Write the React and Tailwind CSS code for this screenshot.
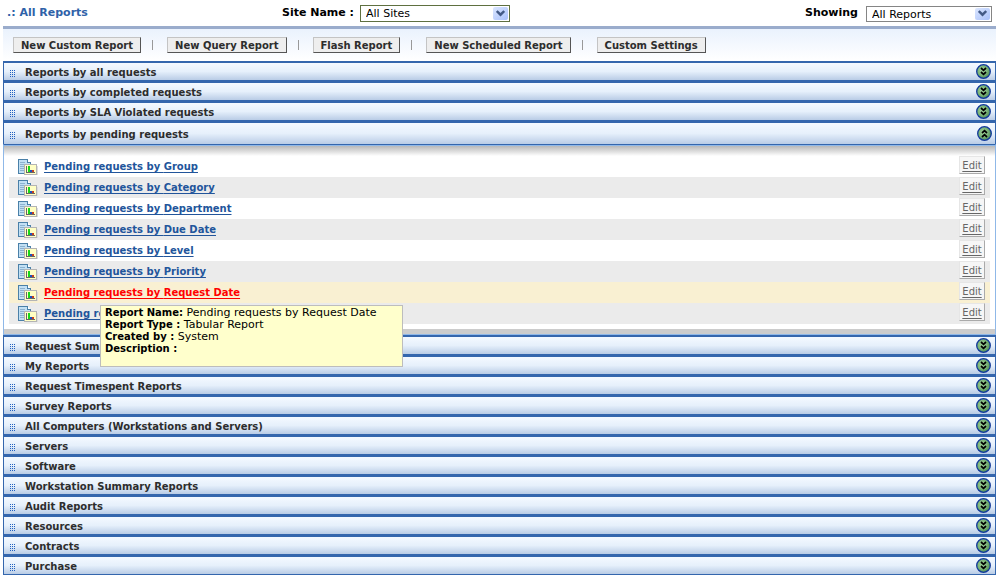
import React, { useState } from 'react'
import { clsx } from 'clsx'

const actions = ['New Custom Report', 'New Query Report', 'Flash Report', 'New Scheduled Report', 'Custom Settings']

const pendingReports = ['Group', 'Category', 'Department', 'Due Date', 'Level', 'Priority', 'Request Date', 'Technician']

const topSections = ['Reports by all requests', 'Reports by completed requests', 'Reports by SLA Violated requests']

const bottomSections = [
    'Request Summary Reports',
    'My Reports',
    'Request Timespent Reports',
    'Survey Reports',
    'All Computers (Workstations and Servers)',
    'Servers',
    'Software',
    'Workstation Summary Reports',
    'Audit Reports',
    'Resources',
    'Contracts',
    'Purchase',
]

function GripIcon() {
    return (
        <svg width="6" height="8" viewBox="0 0 6 8" shapeRendering="crispEdges" className="mt-1 shrink-0" aria-hidden="true">
            {[0, 2, 4].map(x => [0, 2, 4, 6].map(y => (
                <rect key={`${x}-${y}`} x={x} y={y} width="1" height="1" fill="#2060c0" />
            )))}
        </svg>
    )
}

function ToggleIcon({ open }) {
    return (
        <svg width="15" height="15" viewBox="0 0 15 15" className="shrink-0" aria-hidden="true">
            <defs>
                <radialGradient id={open ? 'ballOpen' : 'ballClosed'} cx="42%" cy="42%" r="60%">
                    <stop offset="0" stopColor="#a3d69d" />
                    <stop offset="0.6" stopColor="#78b276" />
                    <stop offset="1" stopColor="#4e8a58" />
                </radialGradient>
            </defs>
            <circle cx="7.5" cy="7.5" r="6.8" fill={open ? 'url(#ballOpen)' : 'url(#ballClosed)'} stroke="#12399b" strokeWidth="1.3" />
            <g transform={open ? 'rotate(180 7.5 7.5)' : undefined} fill="none" stroke="#000" strokeWidth="1.7">
                <path d="M5 4 L7.5 6.3 L10 4" />
                <path d="M5 8 L7.5 10.3 L10 8" />
            </g>
        </svg>
    )
}

function ReportIcon() {
    return (
        <svg width="20" height="16" viewBox="0 0 20 16" shapeRendering="crispEdges" className="shrink-0" aria-hidden="true">
            <path d="M0.5 0.5 H9.5 L12.5 3.5 V14.5 H0.5 Z" fill="#c2e0f4" stroke="#4a80a8" />
            <path d="M9.5 0.5 V3.5 H12.5" fill="#fff" stroke="#4a80a8" />
            <path d="M2 3.5 H7 M2 5.5 H7 M2 7.5 H6 M2 9.5 H6 M2 11.5 H6" stroke="#8db2d0" />
            <rect x="8" y="7" width="12" height="9" fill="#dcdcdc" />
            <rect x="6.5" y="5.5" width="12" height="10" fill="#ffffc4" stroke="#b4b4b4" />
            <path d="M8.5 7 V13.5 H17" fill="none" stroke="#666" />
            <rect x="10" y="7" width="2" height="6" fill="#18d818" />
            <rect x="12" y="11" width="2" height="2" fill="#1b4fc4" />
            <rect x="14" y="11" width="2" height="2" fill="#c8401c" />
        </svg>
    )
}

function SelectBox({ id, label, children, className, wrapClassName }) {
    return (
        <div className="flex items-center gap-1.5">
            <label htmlFor={id} className="whitespace-nowrap text-[11px] font-bold">{label}</label>
            <div className={clsx('relative', wrapClassName)}>
                <select id={id} className={clsx('block w-full appearance-none border bg-white px-[5px] text-[11px] text-black', className)}>
                    {children}
                </select>
                <span className="pointer-events-none absolute inset-y-0.5 right-0.5 flex w-[15px] items-center justify-center rounded-xs bg-linear-to-br from-[#dbe6fe] to-[#a9c1fb]">
                    <svg width="9" height="7" viewBox="0 0 9 7" fill="none" stroke="#435a86" strokeWidth="2.4" aria-hidden="true">
                        <path d="M0.8 1 L4.5 4.7 L8.2 1" />
                    </svg>
                </span>
            </div>
        </div>
    )
}

function SectionHeader({ title, open, onToggle }) {
    return (
        <h2>
            <button
                type="button"
                aria-expanded={open}
                onClick={onToggle}
                className={clsx(
                    'flex w-full items-center bg-linear-to-b from-[#f4f9ff] via-[#e6f0fb] to-[#b9cce6] pl-1.5 text-left',
                    open ? 'h-[21px] pr-[3px]' : 'h-[17px] pr-1'
                )}
            >
                <GripIcon />
                <span className="ml-[9px] flex-1 pt-0.5 text-[10px] leading-[15px] font-bold text-[#2d2d2d]">{title}</span>
                <ToggleIcon open={open} />
            </button>
        </h2>
    )
}

function ReportTooltip() {
    return (
        <div role="tooltip" className="absolute top-[23px] left-[91px] z-10 h-[62px] w-[303px] border border-[#bdbdbd] bg-[#ffffcc] px-1 py-px text-[11px] leading-3 text-black">
            <p><b className="text-[10px]">Report Name:</b> Pending requests by Request Date</p>
            <p><b className="text-[10px]">Report Type :</b> Tabular Report</p>
            <p><b className="text-[10px]">Created by :</b> System</p>
            <p><b className="text-[10px]">Description :</b></p>
        </div>
    )
}

function ReportRow({ name, index }) {
    const active = name === 'Request Date'
    return (
        <li className={clsx('relative flex h-[21px] items-start pr-[5px] pl-[9px]', active ? 'bg-[#f9f0d2]' : index % 2 ? 'bg-[#ebebeb]' : 'bg-white')}>
            <span className="mt-[3px]"><ReportIcon /></span>
            <a
                href="#report"
                className={clsx('ml-1.5 flex-1 text-[10px] leading-[22px] font-bold underline underline-offset-2', active ? 'text-[#f00]' : 'text-[#22559b]')}
            >
                Pending requests by {name}
            </a>
            <a
                href="#edit"
                className="h-[18px] w-[26px] border border-t-[#e6e6e6] border-r-[#aaa] border-b-[#aaa] border-l-[#e6e6e6] bg-[#f6f6f6] text-center text-[10px] leading-[18px] text-[#666] underline underline-offset-2"
            >
                Edit
            </a>
            {active && <ReportTooltip />}
        </li>
    )
}

export default function App() {
    const [opened, setOpened] = useState(true)
    const [openSections, setOpenSections] = useState({})
    const toggle = (title) => setOpenSections(prev => ({ ...prev, [title]: !prev[title] }))

    return (
        <main className="bg-white pr-1 pl-[3px] font-['DejaVu_Sans',Verdana,sans-serif] text-black">
            {/* Title and filters */}
            <header className="flex h-[26px] items-center justify-between px-1 pt-px">
                <h1 className="w-[275px] text-[11px] font-bold text-[#2f62a8]">.: All Reports</h1>
                <SelectBox id="site" label="Site Name :" wrapClassName="w-[150px]" className="h-[17px] border-[#5f7040]">
                    <option>All Sites</option>
                </SelectBox>
                <div className="flex flex-1 justify-end">
                    <SelectBox id="showing" label="Showing" wrapClassName="ml-0.5 w-[126px]" className="h-4 border-[#858585]">
                        <option>All Reports</option>
                    </SelectBox>
                </div>
            </header>

            {/* Actions */}
            <nav className="flex h-[35px] items-center border-t-3 border-[#9aaccc] bg-linear-to-b from-[#eaf2fd] to-white pl-2.5">
                {actions.map((action, i) => (
                    <React.Fragment key={action}>
                        {i > 0 && <span className="mr-3.5 ml-[11px] h-2.5 w-px bg-[#999]" />}
                        <button
                            type="button"
                            className="h-4 border border-t-[#c4c4c4] border-r-[#555] border-b-[#555] border-l-[#c4c4c4] bg-[#eee] px-[7px] text-[10px] leading-4 font-bold whitespace-nowrap text-[#2d2d2d]"
                        >
                            {action}
                        </button>
                    </React.Fragment>
                ))}
            </nav>

            <div className="border-x border-t-2 border-[#3466ad]">
                <div className="flex flex-col gap-[3px] bg-[#3466ad]">
                    {topSections.map(title => (
                        <SectionHeader key={title} title={title} open={!!openSections[title]} onToggle={() => toggle(title)} />
                    ))}
                    <SectionHeader title="Reports by pending requests" open={opened} onToggle={() => setOpened(!opened)} />
                </div>
            </div>

            {/* Expanded section */}
            {opened && (
                <div className="border-x border-t border-[#8fb8e8] border-t-[#3466ad]">
                    <div className="h-[11px] border-t border-[#8fb8e8] bg-linear-to-b from-[#b8b8b8] to-white" />
                    <ul className="mx-[5px]">
                        {pendingReports.map((name, index) => (
                            <ReportRow key={name} name={name} index={index} />
                        ))}
                    </ul>
                    <div className="mt-[5px] h-1.5 border-b border-[#8fb8e8] bg-[#ccc]" />
                </div>
            )}

            <div className="border-x border-t-2 border-b border-[#3466ad]">
                <div className="flex flex-col gap-[3px] bg-[#3466ad]">
                    {bottomSections.map(title => (
                        <SectionHeader key={title} title={title} open={!!openSections[title]} onToggle={() => toggle(title)} />
                    ))}
                </div>
            </div>
        </main>
    )
}
